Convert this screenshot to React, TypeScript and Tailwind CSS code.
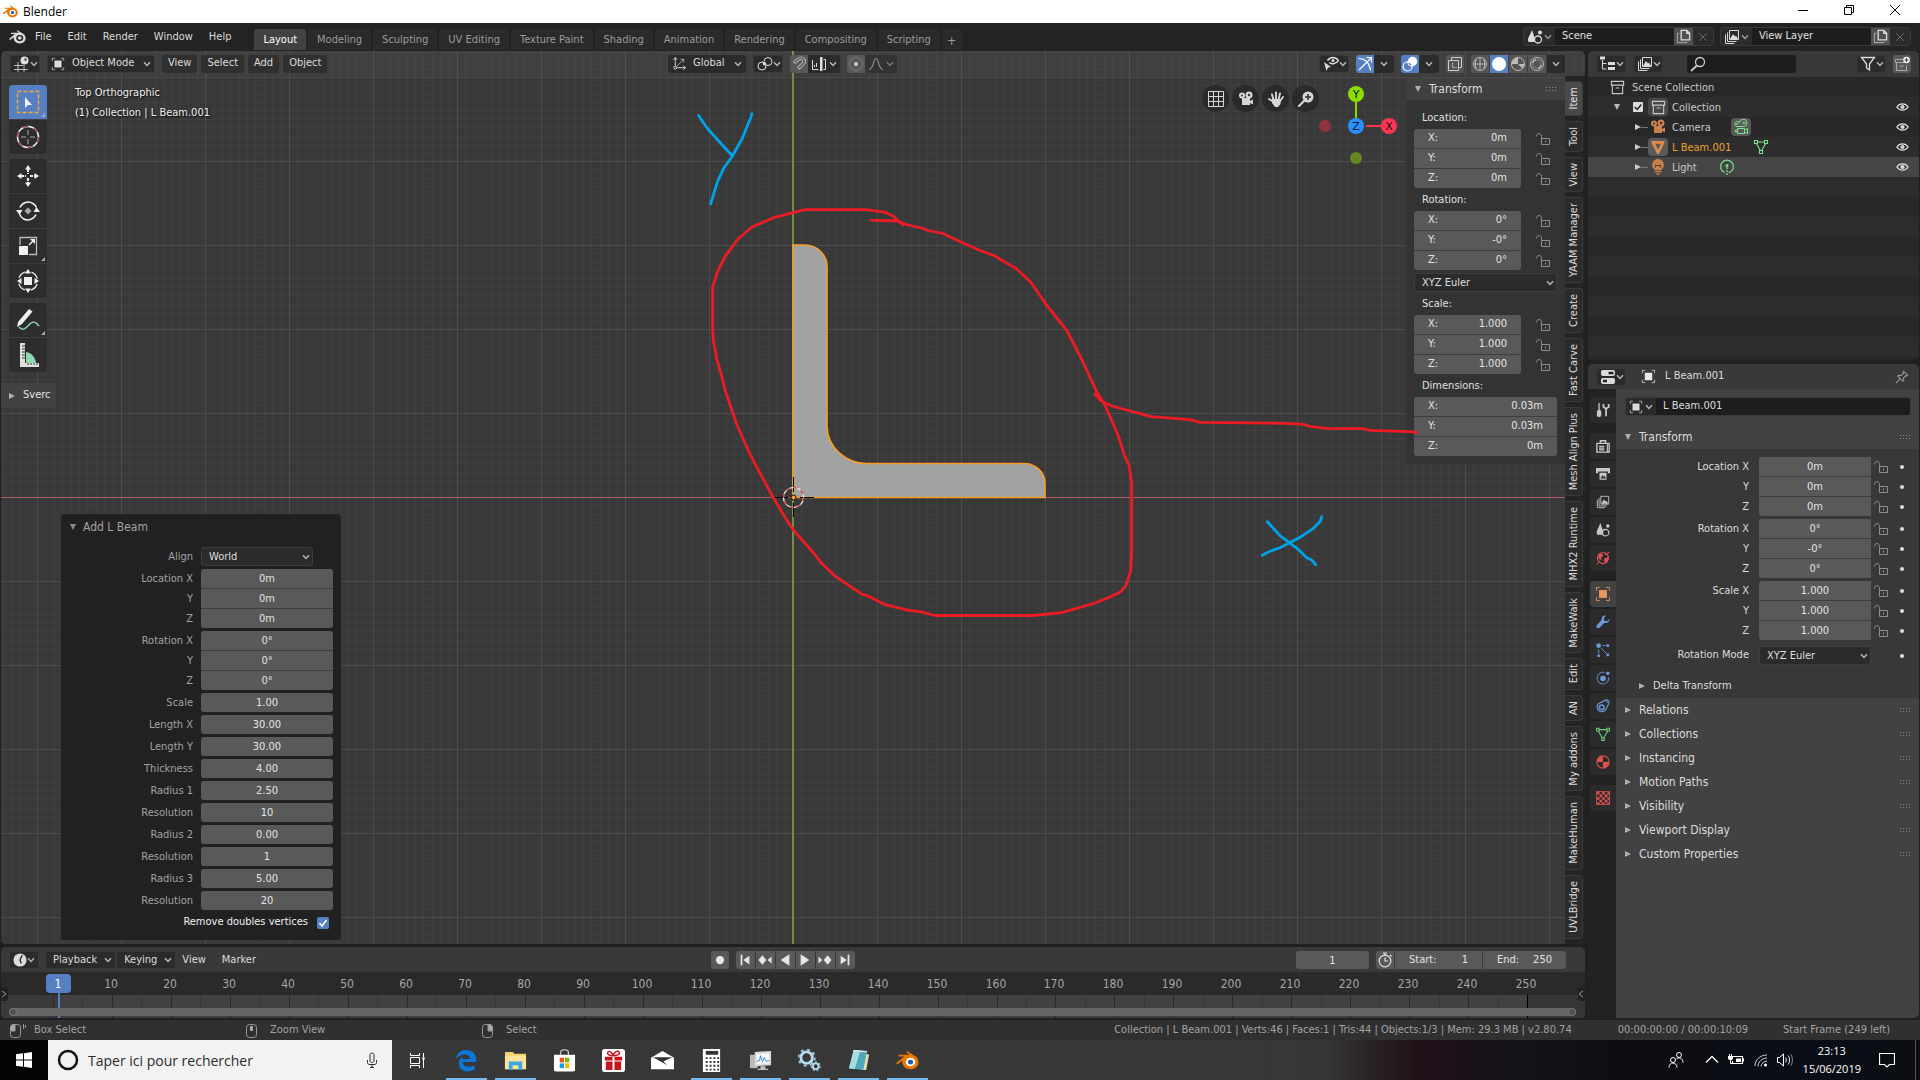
import type { ReactNode } from 'react';
import { useId } from 'react';
import clsx from 'clsx';

/* ---------- icons ---------- */

interface IconProps {
  children: ReactNode;
  className?: string;
}

function Icon({ children, className = 'h-4 w-4' }: IconProps) {
  return (
    <svg
      viewBox="0 0 16 16"
      className={clsx('shrink-0', className)}
      fill="none"
      stroke="currentColor"
      strokeWidth="1"
      aria-hidden="true"
    >
      {children}
    </svg>
  );
}

const Chevron = ({ className = 'text-[#b5b5b5]' }: { className?: string }) => (
  <svg viewBox="0 0 8 6" className={clsx('h-[6px] w-2 shrink-0', className)} aria-hidden="true">
    <path d="M1 1.2 4 4.4 7 1.2" fill="none" stroke="currentColor" strokeWidth="1.5" />
  </svg>
);

function Triangle({ open = false, className = 'text-[#b0b0b0]' }: { open?: boolean; className?: string }) {
  return (
    <svg viewBox="0 0 6 6" className={clsx('h-[6px] w-[6px] shrink-0', className)} aria-hidden="true">
      <path d={open ? 'M0 0h6L3 6z' : 'M0 0v6l6-3z'} fill="currentColor" />
    </svg>
  );
}

function BlenderLogo({ main, iris, className }: { main: string; iris: string; className: string }) {
  return (
    <svg viewBox="0 0 24 20" className={className} aria-hidden="true">
      <path
        d="M12.4.6c-.7-.6-1.8.3-1.2 1l2.7 2.4H3.6c-1.4 0-1.6 1.6-.3 1.7h5.2L.7 12c-1.2 1-.2 2.6 1.2 1.8l4.6-3.6c-.5 4.9 3.4 9 8.6 9 4.9 0 8.5-3.3 8.5-7.4 0-2.5-1.2-4.6-3-6z"
        fill={main}
      />
      <ellipse cx="15.2" cy="11.6" rx="5" ry="4.5" fill={iris === 'none' ? '#232323' : '#fff'} />
      <ellipse cx="15.2" cy="11.6" rx="2.7" ry="2.5" fill={iris === 'none' ? main : iris} />
    </svg>
  );
}

const Grip = ({ className = 'text-[#8a8a8a]' }: { className?: string }) => (
  <svg viewBox="0 0 11 4" className={clsx('h-1 w-[11px] shrink-0', className)} aria-hidden="true">
    {[0, 3, 6, 9].map((x) => (
      <path key={x} d={`M${x} 0h1v1h-1zM${x} 3h1v1h-1z`} fill="currentColor" />
    ))}
  </svg>
);

const Lock = () => (
  <svg viewBox="0 0 16 14" className="h-[14px] w-4 text-[#8f8f8f]" fill="none" stroke="currentColor" aria-hidden="true">
    <path d="M1.5 4.5c0-4 5-4 5 0v2M6.5 6.5h8v6h-8zM10.5 8.5v2" />
  </svg>
);

const ObjectIcon = ({ className }: { className?: string }) => (
  <Icon className={className}>
    <path d="M1.5 4.5v-3h3M11.5 1.5h3v3M14.5 11.5v3h-3M4.5 14.5h-3v-3" opacity=".75" />
    <path d="M4 4h8v8H4z" fill="currentColor" stroke="none" />
  </Icon>
);

const SceneIcon = () => (
  <Icon>
    <path d="M5 1 8 9.5A3.5 3.5 0 0 1 7 13H1.5C0 10 2 8 5 1z" fill="currentColor" stroke="none" />
    <circle cx="11" cy="10.5" r="3.5" strokeWidth="1.3" />
    <circle cx="13" cy="3.5" r="2" fill="currentColor" stroke="none" />
  </Icon>
);

const LayersIcon = () => (
  <Icon>
    <path d="M5.5 1.5h9v9h-9zM3.5 3.5v9h9M1.5 5.5v9h9" />
    <path d="m6 10 3-5 2 2.5 1-1 2 3.5z" fill="currentColor" stroke="none" />
  </Icon>
);

const CopyIcon = () => (
  <Icon className="h-[15px] w-[15px]">
    <path d="M5.5 1.5h6l3 3v7h-9zM11.5 1.5v3h3" strokeWidth="1.4" />
    <path d="M3.5 4.5h-2v10h10v-1" opacity=".7" />
  </Icon>
);

const CollectionIcon = () => (
  <Icon className="h-[15px] w-[15px]">
    <path d="M1.5 1.5h13v4h-13zM2.5 5.5v9h11v-9M6 8.5h4" strokeWidth="1.2" />
  </Icon>
);

const CameraIcon = () => (
  <Icon>
    <circle cx="4" cy="4.5" r="3" fill="currentColor" stroke="none" />
    <circle cx="11" cy="4" r="3.5" fill="currentColor" stroke="none" />
    <path d="M4 7h8v7H4zM12 10l3-1.5v5L12 12" fill="currentColor" stroke="none" />
    <circle cx="4" cy="4.5" r="1" fill="#333" stroke="none" />
    <circle cx="11" cy="4" r="1.2" fill="#333" stroke="none" />
  </Icon>
);

const CameraOutline = () => (
  <Icon>
    <path d="M4 7.5a2.5 2.5 0 1 1 2.5-3.5 3.7 3.7 0 1 1 4.5 3.5zM4.5 9.5h7v5h-7zM11.5 11l3-1.5v5L11.5 13M4.5 11h-2v2h2" />
    <circle cx="11" cy="4" r="1" />
    <circle cx="4" cy="5" r=".6" />
  </Icon>
);

const MeshIcon = () => (
  <Icon>
    <path d="M1.5 1.5h3v3h-3zM11.5 1.5h3v3h-3zM6.5 11.5h3v3h-3zM4.5 3h7M3.5 4.5l3.8 7M12.5 4.5l-3.8 7" strokeWidth="1.1" />
  </Icon>
);

const EyeIcon = () => (
  <Icon className="h-3 w-[13px] text-[#d8d8d8]">
    <path d="M.5 8C4 2.5 12 2.5 15.5 8 12 13.5 4 13.5.5 8z" strokeWidth="1.8" />
    <circle cx="8" cy="8" r="2.8" fill="currentColor" stroke="none" />
  </Icon>
);

/* ---------- shared controls ---------- */

const btn = 'flex h-[18px] items-center rounded-[3px] bg-[#2b2b2b] text-[#dcdcdc]';

function IconMenu({ label, children, className }: { label: string; children: ReactNode; className?: string }) {
  return (
    <button type="button" aria-label={label} className={clsx(btn, 'w-[30px] justify-between border border-[#383838] px-[3px]', className)}>
      {children}
      <Chevron />
    </button>
  );
}

function NumberField({ label, value, className }: { label: string; value: string; className?: string }) {
  return (
    <input
      aria-label={label}
      defaultValue={value}
      className={clsx('min-w-0 w-full bg-[#595959] text-center text-[11px] text-[#e4e4e4] outline-none', className)}
    />
  );
}

function Dropdown({ id, label, value, className }: { id?: string; label: string; value: string; className?: string }) {
  return (
    <div className={clsx('relative h-[19px]', className)}>
      <select
        id={id}
        aria-label={label}
        className="h-full w-full appearance-none rounded-[3px] border border-[#3e3e3e] bg-[#2b2b2b] px-[7px] text-[11px] leading-[17px] text-[#dedede] outline-none"
      >
        <option>{value}</option>
      </select>
      <span className="pointer-events-none absolute inset-y-0 right-[3px] flex items-center">
        <Chevron />
      </span>
    </div>
  );
}

/* ---------- window chrome ---------- */

function TitleBar() {
  return (
    <header className="flex h-[23px] shrink-0 items-center bg-white pl-[3px] pr-[2px] font-['Open_Sans',sans-serif] text-xs text-black">
      <BlenderLogo main="#ea7600" iris="#1f5a9e" className="h-[13px] w-[15px]" />
      <h1 className="ml-[5px]">Blender</h1>
      <div className="ml-auto flex">
        {[
          ['Minimise', 'M3 8.5h10'],
          ['Restore', 'M3.5 5.5h7v7h-7zM5.5 5V3.5h7v7H11'],
          ['Close', 'M3 3l10 10M13 3 3 13'],
        ].map(([label, d]) => (
          <button key={label} type="button" aria-label={label} className="flex w-[46px] justify-center pb-[3px]">
            <Icon className="h-4 w-4">
              <path d={d} />
            </Icon>
          </button>
        ))}
      </div>
    </header>
  );
}

const workspaces = [
  'Layout', 'Modeling', 'Sculpting', 'UV Editing', 'Texture Paint', 'Shading',
  'Animation', 'Rendering', 'Compositing', 'Scripting', '+',
];

function IdBlock({ label, value, icon }: { label: string; value: string; icon: ReactNode }) {
  return (
    <div className="flex h-[19px] w-[191px] overflow-hidden rounded-[3px] border border-[#3a3a3a]">
      <button type="button" aria-label={`Browse ${label}`} className="flex w-[31px] items-center justify-between bg-[#2b2b2b] px-[3px] text-[#dcdcdc]">
        {icon}
        <Chevron className="text-[#999]" />
      </button>
      <input aria-label={label} defaultValue={value} className="min-w-0 flex-1 bg-[#1d1d1d] px-[7px] text-[11px] text-[#e0e0e0] outline-none" />
      <button type="button" aria-label={`New ${label}`} className="flex w-[19px] items-center justify-center bg-[#505050] text-[#dcdcdc]">
        <CopyIcon />
      </button>
      <button type="button" aria-label={`Remove ${label}`} className="flex w-5 items-center justify-center bg-[#2b2b2b] text-[#6a6a6a]">
        <Icon className="h-3 w-3">
          <path d="m3 3 10 10M13 3 3 13" strokeWidth="1.3" />
        </Icon>
      </button>
    </div>
  );
}

function TopBar() {
  return (
    <div className="flex h-7 shrink-0 bg-[#232323]">
      <div className="flex items-center pl-[9px] text-[#dcdcdc]">
        <BlenderLogo main="#dcdcdc" iris="none" className="h-[14px] w-[17px]" />
        <nav className="ml-[1px] flex">
          {['File', 'Edit', 'Render', 'Window', 'Help'].map((m) => (
            <button key={m} type="button" className="px-2">{m}</button>
          ))}
        </nav>
      </div>
      <div className="ml-[15px] mt-[6px] flex h-[21px] gap-[2px]">
        {workspaces.map((w, i) => (
          <button
            key={w}
            type="button"
            className={clsx(
              'rounded-t-[3px] pt-[2px]',
              w === '+' ? 'px-[5px] text-[13px]' : 'px-[9px]',
              i === 0 ? 'bg-[#424242] text-white' : 'bg-[#2a2a2a] text-[#9b9b9b]',
            )}
          >
            {w}
          </button>
        ))}
      </div>
      <div className="ml-auto mr-[9px] mt-[4px] flex gap-[6px]">
        <IdBlock label="Scene" value="Scene" icon={<SceneIcon />} />
        <IdBlock label="View Layer" value="View Layer" icon={<LayersIcon />} />
      </div>
    </div>
  );
}

/* ---------- 3D viewport ---------- */

const range = (from: number, to: number) => Array.from({ length: to - from + 1 }, (_, i) => from + i);

function Grid() {
  return (
    <svg className="absolute inset-0 h-full w-full" aria-hidden="true">
      <g transform="translate(792 446)" shapeRendering="crispEdges">
        {range(-95, 95).map((k) => {
          const p = Math.round(k * 8.4);
          return (
            <g key={k} fill="#3f3f3f">
              <rect x={p} y="-450" width="1" height="950" />
              {k > -54 && k < 60 && <rect x="-800" y={p} width="1600" height="1" />}
            </g>
          );
        })}
        {range(-9, 9).map((k) => (
          <g key={k} fill="#4c4c4c">
            <rect x={k * 84} y="-450" width="1" height="950" />
            {k > -6 && k < 6 && <rect x="-800" y={k * 84} width="1600" height="1" />}
          </g>
        ))}
        <rect x="-800" y="0" width="1600" height="1" fill="#b05a66" />
        <rect x="-1" y="-450" width="2" height="950" fill="#6f8f3f" />
      </g>
      <g transform="translate(792 446)">
        <path
          d="M0 0V-252H11.5A22 22 0 0 1 34 -230V-72A40 38 0 0 0 76 -33.5H231A21 20 0 0 1 252 -14V.5H0z"
          fill="#a1a3a2"
          stroke="#f79c28"
          strokeWidth="1.7"
        />
        <path d="M-19 .5h14M7 .5h14M.5-20v15M.5 6v14" stroke="#000" />
        <circle cx=".5" cy=".5" r="10" fill="none" stroke="#f4f4f4" strokeWidth="1.2" />
        <circle cx=".5" cy=".5" r="10" fill="none" stroke="#e0272d" strokeWidth="1.2" strokeDasharray="3.9 3.9" />
        <circle cx=".5" cy=".5" r="2.5" fill="#f79c28" stroke="#111" strokeWidth="1" />
      </g>
    </svg>
  );
}

// freehand markup on top of the scene
function Annotations() {
  return (
    <svg className="pointer-events-none absolute inset-0 h-full w-full" aria-hidden="true">
      <g transform="translate(-1 -51)" fill="none" strokeWidth="2.8" strokeLinecap="round" strokeLinejoin="round">
        <g stroke="#ed1c24">
          <path d="M871.4 220.3 882 220.5 897 221 908 225 921.6 228 928 230.5 943 233.5 961 242 979 250 995 256 1003 261 1015.5 268 1030.6 282 1048 307 1066.5 330 1082 360 1096.7 391.7 1105 405 1118 435 1125 456.7 1129 465 1131.7 483V553L1130.7 570.7 1125.7 586 1120.7 591.7 1107.7 598 1095 603 1061.7 612.7 1033 615.5H935L920 611.7 906.7 610 884.3 604.3 868.3 596 862.3 594.3 835.7 576.7 821.7 563.3 811.7 550.7 793.3 530 785 517.3 770 491.7 750.7 455.7 736.7 424.3 725 390 722.3 378.3 716.7 358.3 713.3 340 712.7 330V286.7L717.5 271.7 725 256.7 738 239 752 227 774.7 217.3 805 209.7H866.5L885 212.3 893 216 903 225" />
          <path d="M1095 394 1101 401 1112 406 1151 416.7 1190 419.7 1200 422.3 1286.7 423.3 1305 424.7 1309 426.3 1326.7 428.3 1363 428.7 1370 430.3 1410 431.7 1417 432.3" />
        </g>
        <g stroke="#00a2e8">
          <path d="M698.4 115.3 707.3 128.3 721.6 144.3 732.2 155.7M751.8 113.7 751 117 742 139 732 156.7 723.7 168.3 717.5 181.7 710.6 204" />
          <path d="M1267.3 521.7 1280 535.7 1298.3 549.3 1306.7 557.7 1311.7 560 1315.7 564.7M1321.7 516.7 1320 521.7 1313.3 528.3 1300 537.3 1280 547.7 1270 551.3 1262.3 555.3" />
        </g>
      </g>
    </svg>
  );
}

function ViewportHeader() {
  return (
    <div className="relative flex h-[25px] items-center bg-white/[0.03] pb-[1px] pl-[9px] pr-5 pt-[1px]">
      <div className="flex flex-1 gap-[7px]">
        <IconMenu label="Editor type">
          <Icon>
            <path d="M4 6v10M10 9v7M0 9.5h9M0 13.5h14" opacity=".8" />
            <circle cx="10.5" cy="4.5" r="4" fill="currentColor" stroke="none" />
            <circle cx="11.5" cy="3.5" r="1.3" fill="#555" stroke="none" />
          </Icon>
        </IconMenu>
        <button type="button" className={clsx(btn, 'w-[108px] border border-[#383838] px-[3px]')}>
          <ObjectIcon className="h-[14px] w-[14px]" />
          <span className="ml-[7px] mr-auto">Object Mode</span>
          <Chevron />
        </button>
        <div className="flex gap-1">
          {['View', 'Select', 'Add', 'Object'].map((m) => (
            <button key={m} type="button" className={clsx(btn, 'bg-[#303030] px-[6px]')}>{m}</button>
          ))}
        </div>
      </div>
      <div className="flex gap-[7px]">
        <button type="button" className={clsx(btn, 'w-[78px] px-[4px]')}>
          <Icon className="h-[15px] w-[15px]">
            <path d="M3.5 14V2M1.5 4l2-2.5 2 2.5M2 12.5h12M12 10.5l2.5 2-2.5 2" />
            <path d="M5 11 12 4M9 3.5h3.5V7" opacity=".7" />
            <circle cx="3.5" cy="12.5" r="1.5" fill="#2b2b2b" />
          </Icon>
          <span className="ml-[6px] mr-auto">Global</span>
          <Chevron />
        </button>
        <IconMenu label="Pivot point">
          <Icon>
            <circle cx="5" cy="10" r="4" />
            <circle cx="11" cy="5.5" r="4" />
            <circle cx="7.5" cy="7.8" r="1.7" fill="currentColor" stroke="none" />
          </Icon>
        </IconMenu>
        <div className="flex">
          <button type="button" aria-label="Snap" className="flex h-[18px] w-[18px] items-center justify-center rounded-l-[3px] bg-[#595959] text-[#aaa]">
            <Icon className="h-[15px] w-[15px]">
              <path d="M1.5 6 6 2.5C12-1.5 17.5 5 12.5 9.5L8 14l-2-2 4.5-4.5c2.5-3-.5-5-3-3L3.5 8z" strokeWidth="1.2" />
            </Icon>
          </button>
          <button type="button" aria-label="Snap to" className="flex h-[18px] w-8 items-center justify-between rounded-r-[3px] bg-[#2b2b2b] px-[3px] text-[#ddd]">
            <Icon>
              <path d="M1.5 4v9.5h6M3.5 9v2M5.5 7v4M14.5 3.5h-2M14.5 3.5v10h-2" />
              <path d="M9 1h2.5v14H9z" fill="currentColor" stroke="none" />
            </Icon>
            <Chevron />
          </button>
        </div>
        <div className="flex">
          <button type="button" aria-label="Proportional editing" className="flex h-[18px] w-[18px] items-center justify-center rounded-l-[3px] bg-[#595959] text-[#ccc]">
            <Icon>
              <circle cx="8" cy="8" r="6.5" opacity=".3" />
              <circle cx="8" cy="8" r="2" fill="currentColor" stroke="none" />
            </Icon>
          </button>
          <button type="button" aria-label="Falloff" className="flex h-[18px] w-8 items-center justify-between rounded-r-[3px] bg-[#333] px-[3px] text-[#8b8b8b]">
            <Icon>
              <path d="M1 13.5c5 0 4-11 7-11s2 11 7 11" strokeWidth="1.2" />
            </Icon>
            <Chevron className="text-[#777]" />
          </button>
        </div>
      </div>
      <div className="flex flex-1 justify-end gap-[7px] pl-[10px]">
        <IconMenu label="Object visibility">
          <Icon>
            <path d="m1 6 7 5-3 .5L3.5 15z" fill="currentColor" stroke="none" />
            <path d="M4.5 4.5c3-4 8-4 11 0-3 4-7 4-9 2" strokeWidth="1.4" />
            <circle cx="10" cy="4.5" r="1.5" fill="currentColor" stroke="none" />
          </Icon>
        </IconMenu>
        <div className="flex">
          <button type="button" aria-label="Gizmos" className="flex h-[18px] w-[18px] items-center justify-center rounded-l-[3px] bg-[#5680c2] text-white">
            <Icon>
              <path d="M1.5 2.5c7 0 11 5 12 12M2 14 14 2M9.5 1.5h5v5" strokeWidth="1.2" />
            </Icon>
          </button>
          <button type="button" aria-label="Gizmo options" className="flex h-[18px] w-5 items-center justify-center rounded-r-[3px] bg-[#2b2b2b]">
            <Chevron />
          </button>
        </div>
        <div className="flex">
          <button type="button" aria-label="Overlays" className="flex h-[18px] w-[18px] items-center justify-center rounded-l-[3px] bg-[#5680c2] text-white">
            <Icon>
              <circle cx="10.5" cy="5.5" r="4.7" fill="currentColor" stroke="none" />
              <circle cx="5.5" cy="10.5" r="4.5" strokeWidth="1.2" />
              <path d="M5.5 6a4.5 4.5 0 0 1 4.5 4.5 5 5 0 0 1-4.5-4.5z" fill="#5680c2" />
            </Icon>
          </button>
          <button type="button" aria-label="Overlay options" className="flex h-[18px] w-5 items-center justify-center rounded-r-[3px] bg-[#2b2b2b]">
            <Chevron />
          </button>
        </div>
        <button type="button" aria-label="Toggle X-ray" className="flex h-[18px] w-[18px] items-center justify-center rounded-[3px] bg-[#555] text-[#ccc]">
          <Icon>
            <path d="M1.5 4.5h10v10h-10zM4.5 4V1.5h10v10H12" />
            <path d="M5.5 7v4.5h4" strokeDasharray="1.5 1" />
          </Icon>
        </button>
        <div className="flex gap-px overflow-hidden rounded-[3px] text-[#bbb]">
          <button type="button" aria-label="Wireframe" className="flex h-[18px] w-[18px] items-center justify-center bg-[#555]">
            <Icon>
              <circle cx="8" cy="8" r="6.5" />
              <path d="M8 1.5v13M1.5 8h13M4.5 2.5c-1.5 3-1.5 8 0 11M11.5 2.5c1.5 3 1.5 8 0 11" />
            </Icon>
          </button>
          <button type="button" aria-label="Solid" className="flex h-[18px] w-[18px] items-center justify-center bg-[#5680c2] text-white">
            <Icon><circle cx="8" cy="8" r="7" fill="currentColor" stroke="none" /></Icon>
          </button>
          <button type="button" aria-label="Material preview" className="flex h-[18px] w-[18px] items-center justify-center bg-[#555]">
            <Icon>
              <circle cx="8" cy="8" r="6.5" />
              <path d="M8 1.5A6.5 6.5 0 0 0 1.5 8H8zM8 8l4.5 4.5A6.5 6.5 0 0 0 14.5 8z" fill="currentColor" stroke="none" />
            </Icon>
          </button>
          <button type="button" aria-label="Rendered" className="flex h-[18px] w-[18px] items-center justify-center bg-[#555]">
            <Icon>
              <circle cx="8" cy="8" r="6.5" />
              <circle cx="8" cy="8" r="4.3" opacity=".4" />
              <path d="M3.5 7A5 5 0 0 1 7 3.5M12.5 9A5 5 0 0 1 9 12.5" strokeWidth="1.4" />
            </Icon>
          </button>
          <button type="button" aria-label="Shading options" className="flex h-[18px] w-[18px] items-center justify-center bg-[#2b2b2b]">
            <Chevron />
          </button>
        </div>
      </div>
    </div>
  );
}

const toolGroups: { label: string; more?: boolean; art: ReactNode }[][] = [
  [
    {
      label: 'Select Box',
      more: true,
      art: (
        <>
          <path d="M1.5 1.5h21v21h-21z" stroke="#f2a93b" strokeWidth="1.5" strokeDasharray="4 2" />
          <path d="M9 7v11l3-3h4z" fill="#f0f0f0" stroke="none" />
        </>
      ),
    },
    {
      label: 'Cursor',
      art: (
        <>
          <circle cx="12" cy="12" r="10.5" stroke="#eee" strokeWidth="1.5" />
          <circle cx="12" cy="12" r="10.5" stroke="#a14449" strokeWidth="1.5" strokeDasharray="5.5 5.5" />
          <path d="M12 5v5M12 14v5M5 12h5M14 12h5" stroke="#aaa" />
        </>
      ),
    },
  ],
  [
    {
      label: 'Move',
      art: (
        <>
          <path d="M12 5v5M12 14v5M5 12h5M14 12h5" strokeWidth="2" strokeDasharray="3 1" />
          <path d="m12 1 3 4.5H9zM12 23l3-4.5H9zM1 12l4.5-3v6zM23 12l-4.5-3v6z" fill="#eee" stroke="none" />
        </>
      ),
    },
    {
      label: 'Rotate',
      art: (
        <>
          <path d="M4 8.5a9 9 0 0 1 13-4M20 15.5a9 9 0 0 1-13 4M17 4.5a9 9 0 0 1 3.5 4M7 19.5A9 9 0 0 1 3.5 15" strokeWidth="1.5" />
          <path d="M0 11h6.5l-3 5zM24 13h-6.5l3-5z" fill="#eee" stroke="none" />
          <path d="m12 8.5 3.5 3.5-3.5 3.5L8.5 12z" fill="#aaa" stroke="none" />
        </>
      ),
    },
    {
      label: 'Scale',
      more: true,
      art: (
        <>
          <path d="M4 11V3.5h16.5v17H13" stroke="#bbb" strokeWidth="1.3" />
          <path d="M3 12h9v9H3zM14 5h5v5z" fill="#f0f0f0" stroke="none" />
          <path d="m13 11 4-4" strokeWidth="1.5" />
        </>
      ),
    },
    {
      label: 'Transform',
      art: (
        <>
          <circle cx="12" cy="12" r="9.5" strokeWidth="1.3" strokeDasharray="9 6" strokeDashoffset="-3" />
          <path d="M8 8h8v8H8zM12 0l3 4.5H9zM12 24l3-4.5H9zM1 12l4.5-3v6zM23 12l-4.5-3v6z" fill="#f0f0f0" stroke="none" />
        </>
      ),
    },
  ],
  [
    {
      label: 'Annotate',
      more: true,
      art: (
        <>
          <path d="m1 19 1-5L13 1l3.5 2.5L6 16z" fill="#eee" stroke="none" />
          <path d="M3 19c5 6 9-2 12-4s5-1 8 3" stroke="#8dd9ab" strokeWidth="1.5" />
        </>
      ),
    },
    {
      label: 'Measure',
      art: (
        <>
          <path d="M10 9c6 1 9 5 10 11H10z" fill="#8dd9ab" stroke="none" />
          <path d="M4 0h5v20h14v4H4z" fill="#e0e0e0" stroke="none" />
          <path d="M6 3h3M6 6h3M6 9h3M6 12h3M6 15h3M12 20v2M15 20v2M18 20v2M21 20v2" stroke="#333" />
        </>
      ),
    },
  ],
];

function Toolbar() {
  return (
    <div className="ml-2 mt-[9px] flex w-[38px] flex-col gap-[5px]">
      {toolGroups.map((group, g) => (
        <div key={g} className="flex flex-col gap-px overflow-hidden rounded-[4px]">
          {group.map((tool) => (
            <button
              key={tool.label}
              type="button"
              aria-label={tool.label}
              className={clsx(
                'relative flex h-[34px] items-center justify-center text-[#eee]',
                tool.label === 'Select Box' ? 'bg-[#5680c2]' : 'bg-[#2d2d2d]',
              )}
            >
              <svg viewBox="0 0 24 24" className="h-6 w-6" fill="none" stroke="currentColor" aria-hidden="true">
                {tool.art}
              </svg>
              {tool.more && (
                <svg viewBox="0 0 4 4" className="absolute bottom-[2px] right-[2px] h-1 w-1" aria-hidden="true">
                  <path d="M4 0v4H0z" fill="#aaa" />
                </svg>
              )}
            </button>
          ))}
        </div>
      ))}
    </div>
  );
}

const navBtn = 'flex h-[27px] w-[27px] items-center justify-center rounded-full bg-[#2a2a2a]';

function NavGizmo() {
  return (
    <div className="mr-[3px] flex items-start">
      <div className="mt-[9px] flex gap-[3px] text-[#d6d6d6]">
        <button type="button" aria-label="Toggle projection" className={navBtn}>
          <Icon><path d="M.5.5h15v15H.5zM5.5.5v15M10.5.5v15M.5 5.5h15M.5 10.5h15" /></Icon>
        </button>
        <button type="button" aria-label="Camera view" className={navBtn}>
          <CameraIcon />
        </button>
        <button type="button" aria-label="Pan" className={navBtn}>
          <Icon>
            <path d="M5.5 9 4 3.5M8 8V1.5M10.5 8.5 12 2.5M12 10l3-4M5 10.5 1 8" strokeWidth="1.9" strokeLinecap="round" />
            <path d="M4 8h9l-.5 5-2.5 3H7l-3-4z" fill="currentColor" stroke="none" />
          </Icon>
        </button>
        <button type="button" aria-label="Zoom" className={navBtn}>
          <Icon>
            <circle cx="10" cy="6" r="5.5" fill="currentColor" stroke="none" />
            <path d="M6 10 1 15" strokeWidth="2.2" strokeLinecap="round" />
            <path d="M10 3v6M7 6h6" stroke="#2a2a2a" strokeWidth="1.5" />
          </Icon>
        </button>
      </div>
      <svg viewBox="0 0 84 84" className="mt-2 h-[84px] w-[84px]" aria-hidden="true">
        <path d="M37 10v32" stroke="#8bd800" strokeWidth="2" />
        <path d="M47 42h24" stroke="#ff3352" strokeWidth="2" />
        <circle cx="6" cy="42" r="6" fill="#8f3340" />
        <circle cx="37" cy="74" r="6" fill="#64881f" />
        <circle cx="37" cy="10" r="8" fill="#8bdc00" />
        <circle cx="70" cy="42" r="8" fill="#ff3352" />
        <circle cx="37" cy="42" r="8" fill="#2890ff" />
        <g fill="#111" textAnchor="middle" className="font-['DejaVu_Sans',sans-serif] text-[11px]">
          <text x="37" y="14">Y</text>
          <text x="37" y="46">Z</text>
          <text x="70" y="46">X</text>
        </g>
      </svg>
    </div>
  );
}

interface AxisGroupProps {
  name: string;
  values: string[];
  lockable?: boolean;
}

function SideAxisGroup({ name, values, lockable = true }: AxisGroupProps) {
  return (
    <fieldset className="min-w-0">
      <legend className="flex h-[23px] w-full items-center pl-2 pt-[2px] text-[#e0e0e0]">{name}:</legend>
      <div className="flex">
        <div className="flex min-w-0 flex-1 flex-col gap-px overflow-hidden rounded-[3px] bg-[#3d3d3d]">
          {['X', 'Y', 'Z'].map((axis, i) => (
            <label key={axis} className="flex h-[19px] items-center bg-[#595959] px-[14px] text-[#e4e4e4]">
              {axis}:
              <input
                defaultValue={values[i]}
                className="w-0 min-w-0 flex-1 bg-transparent text-right text-[11px] outline-none"
              />
            </label>
          ))}
        </div>
        {lockable && (
          <div className="flex w-9 shrink-0 flex-col gap-px pl-[14px]">
            {['X', 'Y', 'Z'].map((axis) => (
              <button key={axis} type="button" aria-label={`Lock ${name} ${axis}`} className="flex h-[19px] items-center">
                <Lock />
              </button>
            ))}
          </div>
        )}
      </div>
    </fieldset>
  );
}

function SidePanel() {
  return (
    <section className="mt-[2px] w-[159px] shrink-0 self-start bg-[#333]">
      <button type="button" className="flex h-[22px] w-full items-center bg-[#404040] pl-[9px] pr-2 text-xs text-[#dedede]">
        <Triangle open />
        <span className="ml-[8px] mr-auto">Transform</span>
        <Grip />
      </button>
      <div className="px-2 pb-2 pt-[6px]">
        <SideAxisGroup name="Location" values={['0m', '0m', '0m']} />
        <SideAxisGroup name="Rotation" values={['0°', '-0°', '0°']} />
        <Dropdown label="Rotation mode" value="XYZ Euler" className="mt-[3px]" />
        <SideAxisGroup name="Scale" values={['1.000', '1.000', '1.000']} />
        <SideAxisGroup name="Dimensions" values={['0.03m', '0.03m', '0m']} lockable={false} />
      </div>
    </section>
  );
}

const sideTabs = [
  'Item', 'Tool', 'View', 'YAAM Manager', 'Create', 'Fast Carve', 'Mesh Align Plus',
  'MHX2 Runtime', 'MakeWalk', 'Edit', 'AN', 'My addons', 'MakeHuman', 'UVLBridge',
];

function SideTabs() {
  return (
    <div className="flex w-5 shrink-0 flex-col items-start gap-[5px] bg-[#242424] pt-[5px]">
      {sideTabs.map((t, i) => (
        <button
          key={t}
          type="button"
          className={clsx(
            'flex w-[18px] shrink-0 items-center justify-center rounded-r-[4px] border border-l-0 border-[#3a3a3a] py-[5px]',
            i === 0 ? 'bg-[#494949] text-[#e8e8e8]' : 'bg-[#2b2b2b] text-[#dcdcdc]',
          )}
        >
          <span className="rotate-180 leading-4 [writing-mode:vertical-rl]">{t}</span>
        </button>
      ))}
    </div>
  );
}

function AxisRows({ name, values, labelClass, fieldClass }: {
  name: string;
  values: string[];
  labelClass: string;
  fieldClass: string;
}) {
  const id = useId();
  return (
    <div className="flex">
      <div className={clsx('flex flex-col gap-px text-right', labelClass)}>
        {['X', 'Y', 'Z'].map((axis, i) => (
          <label key={axis} htmlFor={`${id}${axis}`} className="h-[19px] leading-[19px]">
            {i === 0 ? `${name} X` : axis}
          </label>
        ))}
      </div>
      <div className={clsx('flex flex-col gap-px overflow-hidden bg-[#3d3d3d]', fieldClass)}>
        {['X', 'Y', 'Z'].map((axis, i) => (
          <input
            key={axis}
            id={`${id}${axis}`}
            defaultValue={values[i]}
            className="h-[19px] w-full bg-[#595959] text-center text-[11px] text-[#e4e4e4] outline-none"
          />
        ))}
      </div>
    </div>
  );
}

const beamFields = [
  ['Scale', '1.00'],
  ['Length X', '30.00'],
  ['Length Y', '30.00'],
  ['Thickness', '4.00'],
  ['Radius 1', '2.50'],
  ['Resolution', '10'],
  ['Radius 2', '0.00'],
  ['Resolution', '1'],
  ['Radius 3', '5.00'],
  ['Resolution', '20'],
];

function OperatorPanel() {
  return (
    <section className="absolute bottom-1 left-[60px] w-[280px] rounded-[3px] bg-[#212121] text-[#a3a3a3]">
      <button type="button" className="flex h-[26px] w-full items-center pl-[9px] text-xs">
        <Triangle open className="text-[#8a8a8a]" />
        <span className="ml-[7px]">Add L Beam</span>
      </button>
      <div className="flex flex-col gap-[3px] pb-2 pr-2 pt-[7px]">
        <div className="flex">
          <label htmlFor="align" className="mr-2 w-[132px] text-right leading-[19px]">Align</label>
          <Dropdown id="align" label="Align" value="World" className="w-[112px]" />
        </div>
        <AxisRows name="Location" values={['0m', '0m', '0m']} labelClass="mr-2 w-[132px]" fieldClass="flex-1 rounded-[3px]" />
        <AxisRows name="Rotation" values={['0°', '0°', '0°']} labelClass="mr-2 w-[132px]" fieldClass="flex-1 rounded-[3px]" />
        {beamFields.map(([label, value], i) => (
          <label key={i} className="flex">
            <span className="mr-2 w-[132px] shrink-0 text-right leading-[19px]">{label}</span>
            <NumberField label={label} value={value} className="h-[19px] rounded-[3px]" />
          </label>
        ))}
        <label className="flex h-[19px] items-center justify-end gap-[9px] pr-[4px] text-[#efefef]">
          Remove doubles vertices
          <span className="relative flex h-3 w-3">
            <input type="checkbox" defaultChecked className="h-3 w-3 appearance-none rounded-[2px] bg-[#5680c2]" />
            <svg viewBox="0 0 12 12" className="pointer-events-none absolute inset-0" aria-hidden="true">
              <path d="m2.5 6 2.5 3 4.5-6" fill="none" stroke="#fff" strokeWidth="1.6" />
            </svg>
          </span>
        </label>
      </div>
    </section>
  );
}

function Viewport() {
  return (
    <main className="relative flex min-h-0 flex-1 flex-col overflow-hidden rounded-[5px] bg-[#393939]">
      <Grid />
      <ViewportHeader />
      <div className="relative flex min-h-0 flex-1">
        <div className="w-[55px]">
          <Toolbar />
          <button type="button" className="mt-[11px] flex h-[25px] w-[55px] items-center bg-[#424242] pl-2 text-[#e4e4e4]">
            <Triangle />
            <span className="ml-2">Sverc</span>
          </button>
        </div>
        <div className="ml-[19px] mt-[7px] leading-5 text-[#f0f0f0] [text-shadow:1px_1px_2px_#000]">
          <p>Top Orthographic</p>
          <p>(1) Collection | L Beam.001</p>
        </div>
        <div className="ml-auto flex">
          <NavGizmo />
          <SidePanel />
          <SideTabs />
        </div>
      </div>
      <OperatorPanel />
      <Annotations />
    </main>
  );
}

/* ---------- timeline ---------- */

const frameX = (f: number) => Math.round(52 + f * 5.897);

const transport = [
  ['Jump to start', 'M3 2v12h2V2zM13 3v10L6 8z'],
  ['Previous keyframe', 'M5 2.5 9.5 8 5 13.5.5 8zM15.5 4v8L11 8z'],
  ['Play reversed', 'M13 1.5v13L3 8z'],
  ['Play', 'M3 1.5v13L13 8z'],
  ['Next keyframe', 'M11 2.5 15.5 8 11 13.5 6.5 8zM.5 4v8L5 8z'],
  ['Jump to end', 'M11 2v12h2V2zM3 3v10l7-5z'],
];

function Timeline() {
  return (
    <section className="mt-[3px] shrink-0 overflow-hidden rounded-[5px] bg-[#393939]">
      <div className="flex h-[25px] items-center pl-2 pr-[19px] pt-px">
        <div className="flex flex-1 items-center">
          <IconMenu label="Editor type">
            <Icon className="h-[14px] w-[14px]">
              <circle cx="8" cy="8" r="7.5" fill="currentColor" stroke="none" />
              <path d="M10.5 2.5 8 8l1.5 4" stroke="#222" strokeWidth="1.5" />
            </Icon>
          </IconMenu>
          {['Playback', 'Keying'].map((m, i) => (
            <button key={m} type="button" className={clsx(btn, 'gap-[7px] rounded-none border border-[#383838] pl-[7px] pr-[3px]', i === 0 && 'ml-[6px]')}>
              {m}
              <Chevron />
            </button>
          ))}
          <button type="button" className="ml-[6px] text-[#dcdcdc]">View</button>
          <button type="button" className="ml-4 text-[#dcdcdc]">Marker</button>
        </div>
        <div className="flex gap-[7px] text-[#e6e6e6]">
          <button type="button" aria-label="Auto keying" className="flex h-[18px] w-[18px] items-center justify-center rounded-[3px] bg-[#595959]">
            <Icon className="h-3 w-3"><circle cx="8" cy="8" r="5.5" fill="currentColor" stroke="none" /></Icon>
          </button>
          <div className="flex gap-px overflow-hidden rounded-[3px]">
            {transport.map(([label, d]) => (
              <button key={label} type="button" aria-label={label} className="flex h-[18px] w-[19px] items-center justify-center bg-[#595959]">
                <Icon className="h-[14px] w-4">
                  <path d={d} fill="currentColor" stroke="none" />
                </Icon>
              </button>
            ))}
          </div>
        </div>
        <div className="flex flex-1 justify-end gap-[7px] pl-[10px]">
          <NumberField label="Current frame" value="1" className="h-[18px] max-w-[73px] rounded-[3px]" />
          <div className="flex h-[18px] gap-px overflow-hidden rounded-[3px] text-[#e4e4e4]">
            <button type="button" aria-label="Use preview range" className="flex w-[18px] items-center justify-center bg-[#595959]">
              <Icon>
                <circle cx="8" cy="9" r="5.8" strokeWidth="1.2" />
                <path d="M8 5.5V9h3M6 1h4M8 1v2M13 3l1.5 1.5" strokeWidth="1.2" />
              </Icon>
            </button>
            <label className="flex w-[87px] items-center bg-[#595959] px-[14px]">
              Start:
              <input defaultValue="1" className="min-w-0 flex-1 bg-transparent text-right text-[11px] outline-none" />
            </label>
            <label className="flex w-[83px] items-center bg-[#595959] px-[14px]">
              End:
              <input defaultValue="250" className="min-w-0 flex-1 bg-transparent text-right text-[11px] outline-none" />
            </label>
          </div>
        </div>
      </div>
      <div className="relative h-[46px] bg-[#414141]">
        <svg className="absolute inset-0 h-full w-full" shapeRendering="crispEdges" role="img" aria-label="Frame ruler">
          <rect width="100%" height="23" fill="#2a2a2a" />
          <rect y="23" width="57" height="23" fill="#3a3a3a" />
          <rect x={frameX(250)} y="23" width="100" height="23" fill="#363636" />
          {range(0, 51).map((k) => (
            <rect key={k} x={frameX(k * 5)} y="23" width="1" height="23" fill={k === 50 ? '#000' : k % 2 ? '#383838' : '#2b2b2b'} />
          ))}
          <g fill="#a6a6a6" textAnchor="middle" className="text-[12px]">
            {range(1, 25).map((k) => (
              <text key={k} x={frameX(k * 10) - 1} y="16">{k * 10}</text>
            ))}
          </g>
          <rect x="57" y="20" width="2" height="26" fill="#5680c2" />
          <rect x="45" y="2" width="25" height="19" rx="4" fill="#5680c2" shapeRendering="auto" />
          <text x="57" y="16" textAnchor="middle" fill="#fff" className="text-[12px]">1</text>
        </svg>
        <div className="absolute bottom-[2px] left-2 right-[9px] flex h-2 items-center justify-between rounded-full bg-[#666]">
          <span className="h-2 w-2 rounded-full border border-[#777] bg-[#505050]" />
          <span className="h-2 w-2 rounded-full border border-[#777] bg-[#505050]" />
        </div>
        <button type="button" aria-label="Show channels" className="absolute left-0 top-[15px] flex h-[14px] w-[7px] items-center rounded-r-[3px] bg-[#222] text-[#999]">
          <svg viewBox="0 0 6 8" className="h-2 w-[6px]" aria-hidden="true"><path d="m1 1 4 3-4 3" fill="none" stroke="currentColor" /></svg>
        </button>
        <button type="button" aria-label="Show sidebar" className="absolute right-0 top-[15px] flex h-[14px] w-[7px] items-center rounded-l-[3px] bg-[#222] text-[#999]">
          <svg viewBox="0 0 6 8" className="h-2 w-[6px]" aria-hidden="true"><path d="M5 1 1 4l4 3" fill="none" stroke="currentColor" /></svg>
        </button>
      </div>
    </section>
  );
}

/* ---------- outliner ---------- */

interface OutlinerItem {
  name: string;
  icon: ReactNode;
  data: ReactNode;
  active?: boolean;
}

const outlinerItems: OutlinerItem[] = [
  {
    name: 'Camera',
    icon: <span className="flex h-[18px] w-5 items-center justify-center text-[#c9814b]"><CameraIcon /></span>,
    data: <span className="flex h-[18px] w-5 items-center justify-center rounded-[4px] bg-[#5a5a5a] text-[#7ee084]"><CameraOutline /></span>,
  },
  {
    name: 'L Beam.001',
    icon: (
      <span className="flex h-[18px] w-5 items-center justify-center rounded-[4px] bg-[#5a5a5a] text-[#e08a4a]">
        <Icon className="h-[15px] w-4"><path d="M2.5 2.5h11L8 13.5z" strokeWidth="3" strokeLinejoin="round" /></Icon>
      </span>
    ),
    data: <span className="flex h-[18px] w-5 items-center justify-center text-[#7ee084]"><MeshIcon /></span>,
    active: true,
  },
  {
    name: 'Light',
    icon: (
      <span className="flex h-[18px] w-5 items-center justify-center text-[#c9814b]">
        <Icon>
          <path d="M8 0a5.8 5.8 0 0 1 4 10l-1 1H5l-1-1A5.8 5.8 0 0 1 8 0z" fill="currentColor" stroke="none" />
          <path d="M4.5 12.5h7M6.5 15h3" strokeWidth="1.5" />
          <path d="M5.5 5.5v3M10.5 5.5v3M5.5 6.5h5" stroke="#444" />
        </Icon>
      </span>
    ),
    data: (
      <span className="flex h-[18px] w-5 items-center justify-center text-[#7ee084]">
        <Icon>
          <circle cx="8" cy="7.5" r="6.3" strokeDasharray="36 4" strokeDashoffset="-12" strokeWidth="1.2" />
          <circle cx="8" cy="6.5" r="1.5" fill="currentColor" stroke="none" />
          <path d="M8 8v8" strokeDasharray="2 1" strokeWidth="1.3" />
        </Icon>
      </span>
    ),
  },
];

function Outliner() {
  return (
    <section className="flex h-[309px] shrink-0 flex-col overflow-hidden rounded-[5px] bg-[#282828] text-[#c8c8c8]">
      <div className="flex h-[26px] shrink-0 items-center bg-[#393939] px-[8px] pb-px">
        <IconMenu label="Editor type">
          <Icon>
            <path d="M0 2h5M8 7.5h7M8 12.5h7" strokeWidth="3" />
            <path d="M2.5 4v9h4M2.5 7.5h4" />
          </Icon>
        </IconMenu>
        <IconMenu label="Display mode" className="ml-[7px]"><LayersIcon /></IconMenu>
        <div className="relative ml-6 h-[18px] w-[109px]">
          <input aria-label="Search" className="h-full w-full rounded-[3px] bg-[#1d1d1d] pl-5 text-[11px] outline-none" />
          <Icon className="pointer-events-none absolute left-[3px] top-[1px] h-4 w-4 text-[#ccc]">
            <circle cx="10" cy="6" r="4.5" strokeWidth="1.3" />
            <path d="m7 9.5-6 5.5" strokeWidth="1.8" />
          </Icon>
        </div>
        <IconMenu label="Filter" className="ml-auto">
          <Icon><path d="M1.5 1.5h13L9.5 8v6l-3-2V8z" strokeWidth="1.3" /></Icon>
        </IconMenu>
        <button type="button" aria-label="New collection" className="ml-[7px] flex h-[18px] w-[18px] items-center justify-center rounded-[3px] bg-[#595959] text-[#aaa]">
          <Icon>
            <path d="M9 3.5H1.5v3H11M2.5 6.5v8h10v-5M5.5 10h4" />
            <circle cx="12.5" cy="4" r="3.3" fill="#eee" stroke="none" />
            <path d="M12.5 2v4M10.5 4h4" stroke="#444" />
          </Icon>
        </button>
      </div>
      <div className="flex min-h-0 flex-1 flex-col">
        <div className="flex h-5 shrink-0 items-center pl-[22px]">
          <CollectionIcon />
          <span className="ml-[7px] pt-[2px]">Scene Collection</span>
        </div>
        <div className="flex h-5 shrink-0 items-center bg-[#2d2d2d] pl-[26px] pr-[10px]">
          <Triangle open className="text-[#bbb]" />
          <span className="relative ml-[13px] flex h-[10px] w-[10px]">
            <input type="checkbox" aria-label="Enable Collection" defaultChecked className="h-[10px] w-[10px] appearance-none rounded-[1px] bg-[#dcdcdc]" />
            <svg viewBox="0 0 12 12" className="pointer-events-none absolute inset-0" aria-hidden="true">
              <path d="m2 6 3 3 5-6" fill="none" stroke="#222" strokeWidth="1.8" />
            </svg>
          </span>
          <span className="ml-[5px] flex h-[18px] w-5 items-center justify-center rounded-[4px] bg-[#484848]"><CollectionIcon /></span>
          <span className="ml-1 pt-[2px]">Collection</span>
          <button type="button" aria-label="Hide Collection" className="ml-auto"><EyeIcon /></button>
        </div>
        {outlinerItems.map((item, i) => (
          <div
            key={item.name}
            className={clsx(
              'flex h-5 shrink-0 items-center pl-[47px] pr-[10px]',
              i === 0 && 'bg-[#282828]',
              i === 1 && 'bg-[#2d2d2d]',
              i === 2 && 'bg-[#454545]',
            )}
          >
            <Triangle className="text-[#ccc]" />
            <span className="h-px w-[7px] bg-[#777]" />
            {item.icon}
            <span className={clsx('ml-1 mr-5 pt-[2px]', item.active && 'text-[#f0a030]')}>{item.name}</span>
            {item.data}
            <button type="button" aria-label={`Hide ${item.name}`} className="ml-auto"><EyeIcon /></button>
          </div>
        ))}
        <div className="flex-1 bg-[repeating-linear-gradient(#2d2d2d_0_20px,#282828_20px_40px)]" />
      </div>
    </section>
  );
}

/* ---------- properties editor ---------- */

const propertyTabs: { label: string; color: string; art: ReactNode }[][] = [
  [
    {
      label: 'Tool',
      color: 'text-[#c8c8c8]',
      art: (
        <>
          <path d="M3.5 0v8M1.5 11h4" strokeWidth="1.5" />
          <rect x="1" y="8" width="5" height="8" rx="2" fill="currentColor" stroke="none" />
          <path d="M11.5 15V6M8.5 1v3.5l3 2 3-2V1" strokeWidth="2" />
        </>
      ),
    },
  ],
  [
    {
      label: 'Render',
      color: 'text-[#c8c8c8]',
      art: (
        <>
          <path d="M1 5h14v10H1zM5 2h6v3H5z" strokeWidth="1.6" />
          <path d="M3.5 8.5h6M3.5 10.5h6M3.5 12.5h6M13 6v9" strokeWidth="1.3" />
        </>
      ),
    },
    {
      label: 'Output',
      color: 'text-[#c8c8c8]',
      art: (
        <>
          <path d="M0 1h16v6h-2.5V5h-11v2H0z" fill="currentColor" stroke="none" />
          <path d="M4 6.5h8v8H4z" fill="currentColor" stroke="none" />
          <path d="m5 13 2.5-3.5L9 11l1-1 1.5 3z" fill="#333" stroke="none" />
        </>
      ),
    },
    {
      label: 'View Layer',
      color: 'text-[#c8c8c8]',
      art: (
        <>
          <path d="M5.5 1.5h9v9h-9zM3.5 3.5v9h9M1.5 5.5v9h9" />
          <path d="m6 10 3-5 2 2.5 1-1 2 3.5z" fill="currentColor" stroke="none" />
        </>
      ),
    },
    {
      label: 'Scene',
      color: 'text-[#c8c8c8]',
      art: (
        <>
          <path d="M5 0 8 9a4 4 0 0 1-1 4.5H1.5C-.5 10 2 8 5 0z" fill="currentColor" stroke="none" />
          <circle cx="11" cy="11" r="3.7" strokeWidth="1.4" />
          <circle cx="13.5" cy="3.5" r="2" fill="currentColor" stroke="none" />
        </>
      ),
    },
    {
      label: 'World',
      color: 'text-[#d9534f]',
      art: (
        <>
          <circle cx="8" cy="8" r="6.3" strokeWidth="1.4" />
          <path d="M3 4c3-2 5-1 5 1s-3 1.5-2 4-2 1-3-1zM10 8l4-1v3l-3 4-2-3zM9 2l4 2-2 1z" fill="currentColor" stroke="none" />
          <path d="m1 15 2-2M13 3l2-2" strokeWidth="1.3" />
        </>
      ),
    },
  ],
  [
    {
      label: 'Object',
      color: 'text-[#e8965a]',
      art: (
        <>
          <path d="M.5 4.5v-4h4M11.5.5h4v4M15.5 11.5v4h-4M4.5 15.5h-4v-4" />
          <path d="M3.5 3.5h9v9h-9z" fill="currentColor" stroke="none" />
        </>
      ),
    },
    {
      label: 'Modifiers',
      color: 'text-[#6d97d8]',
      art: <path d="M15.5 4.5 12.5 7 9.5 6.5 9 3.5 11.5.7C8 0 6 2.5 6.5 5.5L.8 12c-1.3 2 1 4 2.8 2.8L9.5 9c3 1 6-1 6-4.5z" fill="currentColor" stroke="none" />,
    },
    {
      label: 'Particles',
      color: 'text-[#6d97d8]',
      art: (
        <>
          <circle cx="3" cy="3" r="2.7" fill="currentColor" stroke="none" />
          <path d="M7 3h4M3 7v5M5.5 5.5 12 12" />
          <path d="M12 1.5h3v3h-3zM1.5 13h3v3h-3zM12 12h3v3h-3z" fill="currentColor" stroke="none" />
        </>
      ),
    },
    {
      label: 'Physics',
      color: 'text-[#6d97d8]',
      art: (
        <>
          <path d="M10 1.8a6.7 6.7 0 1 0 4.5 5" strokeWidth="1.2" opacity=".8" />
          <circle cx="8" cy="8.5" r="3.2" fill="currentColor" stroke="none" />
          <circle cx="13.5" cy="2.7" r="2" fill="currentColor" stroke="none" />
        </>
      ),
    },
    {
      label: 'Constraints',
      color: 'text-[#6d97d8]',
      art: (
        <>
          <path d="M2.5 5.5 11 1.3c2.5-1 4.5 1.5 3.7 3.5L11 12.5A5.2 5.2 0 1 1 2.5 5.5z" strokeWidth="1.3" />
          <circle cx="6.5" cy="9.5" r="2.7" strokeWidth="1.8" />
          <circle cx="12.5" cy="3.5" r="1" fill="currentColor" stroke="none" />
        </>
      ),
    },
    {
      label: 'Object Data',
      color: 'text-[#6fd07a]',
      art: <path d="M.5 1.5h3v3h-3zM12.5 1.5h3v3h-3zM6.5 12.5h3v3h-3zM3.5 3h9M2.5 4.5l4.8 8M13.5 4.5l-4.8 8" strokeWidth="1.2" />,
    },
    {
      label: 'Material',
      color: 'text-[#d9534f]',
      art: (
        <>
          <circle cx="8" cy="8" r="7" strokeWidth="1.2" />
          <path d="M8 1a7 7 0 0 0-7 7h7zM8 8v7a7 7 0 0 0 7-7z" fill="currentColor" stroke="none" />
        </>
      ),
    },
  ],
  [
    {
      label: 'Texture',
      color: 'text-[#d9534f]',
      art: (
        <>
          <path d="M.5.5h15v15H.5z" />
          <path d="M1 1h3v3H1zM7 1h3v3H7zM4 4h3v3H4zM10 4h3v3h-3zM1 7h3v3H1zM7 7h3v3H7zM13 7h2v3h-2zM4 10h3v3H4zM10 10h3v3h-3zM13 1h2v3h-2zM1 13h3v2H1zM7 13h3v2H7zM13 13h2v2h-2z" fill="currentColor" stroke="none" />
        </>
      ),
    },
  ],
];

function LockColumn({ name }: { name: string }) {
  return (
    <>
      <div className="ml-[2px] flex w-5 flex-col gap-px">
        {['X', 'Y', 'Z'].map((axis) => (
          <button key={axis} type="button" aria-label={`Lock ${name} ${axis}`} className="flex h-[19px] items-center">
            <Lock />
          </button>
        ))}
      </div>
      <div className="ml-[7px] flex flex-col gap-px">
        {['X', 'Y', 'Z'].map((axis) => (
          <button key={axis} type="button" aria-label={`Animate ${name} ${axis}`} className="flex h-[19px] items-center">
            <span className="h-1 w-1 rounded-full bg-[#dcdcdc]" />
          </button>
        ))}
      </div>
    </>
  );
}

const transformGroups = [
  { name: 'Location', values: ['0m', '0m', '0m'] },
  { name: 'Rotation', values: ['0°', '-0°', '0°'] },
  { name: 'Scale', values: ['1.000', '1.000', '1.000'] },
];

function Properties() {
  return (
    <section className="mt-1 flex min-h-0 flex-1 flex-col overflow-hidden rounded-[5px] bg-[#424242] text-[#dcdcdc]">
      <div className="flex h-[25px] shrink-0 items-center bg-[#393939] pl-[8px] pr-[10px]">
        <IconMenu label="Editor type">
          <Icon>
            <rect x="1" y="1" width="14" height="6" rx="2" fill="currentColor" stroke="none" />
            <rect x="1" y="9" width="14" height="6" rx="2" fill="currentColor" stroke="none" />
            <path d="M8.5 4h5M3 12h4" stroke="#222" strokeWidth="2.5" />
          </Icon>
        </IconMenu>
        <ObjectIcon className="ml-[15px] h-[15px] w-[15px] text-[#e8e8e8]" />
        <span className="ml-[9px] mr-auto">L Beam.001</span>
        <button type="button" aria-label="Pin" className="text-[#999]">
          <Icon className="h-[14px] w-[14px]">
            <path d="M10 1.5 14.5 6 13 7l-1-.5-2.5 3 .5 2.5-1 1L3 7l1-1 2.5.5 3-2.5-.5-1zM5.5 10.5 1 15" strokeWidth="1.2" />
          </Icon>
        </button>
      </div>
      <div className="flex min-h-0 flex-1">
        <div className="flex w-7 shrink-0 flex-col gap-[10px] bg-[#222] pl-[2px] pt-[8px]">
          {propertyTabs.map((group, g) => (
            <div key={g} className="flex flex-col gap-[2px]">
              {group.map((tab) => (
                <button
                  key={tab.label}
                  type="button"
                  aria-label={tab.label}
                  className={clsx(
                    'flex h-[26px] items-center justify-center rounded-l-[4px]',
                    tab.color,
                    tab.label === 'Object' ? 'bg-[#424242]' : 'bg-[#2b2b2b]',
                  )}
                >
                  <Icon className="h-[14px] w-[14px]">{tab.art}</Icon>
                </button>
              ))}
            </div>
          ))}
        </div>
        <div className="min-w-0 flex-1">
          <div className="ml-[9px] mr-2 mt-[8px] flex h-[19px] overflow-hidden rounded-[3px] border border-[#3a3a3a]">
            <button type="button" aria-label="Browse object" className="flex w-[30px] items-center justify-between bg-[#2b2b2b] px-[3px]">
              <ObjectIcon className="h-[14px] w-[14px]" />
              <Chevron />
            </button>
            <input aria-label="Object name" defaultValue="L Beam.001" className="min-w-0 flex-1 bg-[#1d1d1d] px-[7px] text-[11px] outline-none" />
          </div>
          <button type="button" className="mt-[9px] flex h-6 w-full items-center pl-[9px] pr-2 text-xs">
            <Triangle open />
            <span className="ml-[8px] mr-auto">Transform</span>
            <Grip />
          </button>
          <div className="flex flex-col gap-[3px] bg-[#383838] pt-[8px]">
            {transformGroups.map((g) => (
              <div key={g.name} className="flex pr-[15px]">
                <div className="flex-1">
                  <AxisRows name={g.name} values={g.values} labelClass="mr-[10px] flex-1" fieldClass="w-[112px] rounded-l-[3px]" />
                </div>
                <LockColumn name={g.name} />
              </div>
            ))}
            <div className="mt-[3px] flex items-center pr-[15px]">
              <label htmlFor="rotation-mode" className="mr-[10px] flex-1 text-right">Rotation Mode</label>
              <Dropdown id="rotation-mode" label="Rotation Mode" value="XYZ Euler" className="w-[112px]" />
              <button type="button" aria-label="Animate Rotation Mode" className="ml-[29px]">
                <span className="block h-1 w-1 rounded-full bg-[#dcdcdc]" />
              </button>
            </div>
            <button type="button" className="mt-[6px] flex h-6 items-center pl-[23px]">
              <Triangle />
              <span className="ml-[8px]">Delta Transform</span>
            </button>
          </div>
          {['Relations', 'Collections', 'Instancing', 'Motion Paths', 'Visibility', 'Viewport Display', 'Custom Properties'].map((p) => (
            <button key={p} type="button" className="flex h-6 w-full items-center pl-[9px] pr-2 text-xs">
              <Triangle />
              <span className="ml-[8px] mr-auto">{p}</span>
              <Grip />
            </button>
          ))}
        </div>
      </div>
    </section>
  );
}

/* ---------- status bar and taskbar ---------- */

function MouseHint({ button, label }: { button: 'left' | 'middle' | 'right'; label: string }) {
  return (
    <div className="flex w-[236px] items-center">
      <svg viewBox="0 0 18 16" className="h-4 w-[18px]" fill="none" stroke="#999" aria-hidden="true">
        <rect x="1.5" y="1.5" width="10" height="13" rx="3" />
        {button === 'left' && <path d="M1.5 8V4l2-2.5H6V8zM14.5 1v5M16.5 2v3" fill="#aaa" />}
        {button === 'middle' && <rect x="5" y="3" width="3" height="5" rx="1" fill="#aaa" stroke="none" />}
        {button === 'right' && <path d="M11.5 8V4l-2-2.5H7V8z" fill="#aaa" />}
      </svg>
      <span className="ml-[7px]">{label}</span>
    </div>
  );
}

function StatusBar() {
  return (
    <footer className="mt-[2px] flex h-5 shrink-0 items-center bg-[#303030] pl-[9px] pr-[30px] pt-px text-[#a3a3a3]">
      <MouseHint button="left" label="Box Select" />
      <MouseHint button="middle" label="Zoom View" />
      <MouseHint button="right" label="Select" />
      <span className="ml-auto">Collection | L Beam.001 | Verts:46 | Faces:1 | Tris:44 | Objects:1/3 | Mem: 29.3 MB | v2.80.74</span>
      <span className="ml-[46px]">00:00:00:00 / 00:00:10:09</span>
      <span className="ml-[35px]">Start Frame (249 left)</span>
    </footer>
  );
}

const taskbarApps: { name: string; running: boolean; art: ReactNode }[] = [
  {
    name: 'Edge',
    running: true,
    art: <path d="M1 10.5C2 4 6 1 12 1c6.5 0 10 4.5 10 10v2.5H8c0 5 7 6.5 12.5 3.5v4.5C13 25.5 4 23 4 15c0-3.5 2-6 4.5-7.5C7.5 9 7.3 10 7.3 10.5h8.4c0-6-9-6.5-14.7 0z" fill="#0a78d6" />,
  },
  {
    name: 'File Explorer',
    running: true,
    art: (
      <>
        <path d="M1 3h8l2 2h12v16H1z" fill="#f5cf6b" />
        <path d="M1 7h22v14H1z" fill="#fde39a" />
        <path d="M5 13h14v9h-4v-5H9v5H5z" fill="#3ba7e0" />
      </>
    ),
  },
  {
    name: 'Store',
    running: false,
    art: (
      <>
        <path d="M8 6V3c0-3 8-3 8 0v3" fill="none" stroke="#ddd" strokeWidth="1.2" />
        <path d="M1 6h22v16c0 1-1 1.5-2 1.5H3c-1 0-2-.5-2-1.5z" fill="#fff" />
        <path d="M7 9h4.5v5H7z" fill="#f25022" />
        <path d="M12.5 9H17v5h-4.5z" fill="#7fba00" />
        <path d="M7 15h4.5v5H7z" fill="#00a4ef" />
        <path d="M12.5 15H17v5h-4.5z" fill="#ffb900" />
      </>
    ),
  },
  {
    name: 'Gift',
    running: false,
    art: (
      <>
        <rect x="0" y="0" width="24" height="24" rx="3" fill="#fff" />
        <path d="M3 8h8v4H3zM13 8h8v4h-8zM4 13h7v9H4zM13 13h7v9h-7z" fill="#c4161c" />
        <path d="M11.5 7C8 7 5 6 6 3.5s5 0 5.5 3.5C12.5 3 17 1 18 3.5S15 7 11.5 7z" fill="none" stroke="#c4161c" strokeWidth="1.5" />
      </>
    ),
  },
  {
    name: 'Mail',
    running: false,
    art: (
      <>
        <path d="M0 9 12 2l12 7v12H0z" fill="#fff" />
        <path d="M2 8.5h20L13 13l4 4-6-3.5z" fill="#333" />
      </>
    ),
  },
  {
    name: 'Calculator',
    running: true,
    art: (
      <>
        <path d="M3 0h18v24H3z" fill="#fff" />
        <path d="M6 2h13v4H6z" fill="#333" />
        <path d="M6 9.5h14M6 13.5h14M6 17.5h14M6 21.5h14" stroke="#333" strokeWidth="2" strokeDasharray="2 2" />
      </>
    ),
  },
  {
    name: 'Resource Monitor',
    running: true,
    art: (
      <>
        <path d="M1 6h8v14H1z" fill="#b9b9b9" />
        <path d="m6 3 17-1v15l-17 1z" fill="#d8d8d8" />
        <path d="m8 5 13-.7v11L8 16z" fill="#f2f8fd" />
        <path d="m8 13 3-1 1-5 2 6 2-4 2 4 3-1" stroke="#3b84c4" fill="none" />
        <path d="M12 18h5v2.5h3V22H9v-1.5h3z" fill="#c4c4c4" />
      </>
    ),
  },
  {
    name: 'Services',
    running: true,
    art: (
      <>
        <circle cx="9" cy="9" r="6" fill="none" stroke="#b5dcf2" strokeWidth="3" />
        <circle cx="9" cy="9" r="8.5" fill="none" stroke="#9ecbe8" strokeWidth="2" strokeDasharray="3 3.7" />
        <circle cx="18.5" cy="18" r="3" fill="none" stroke="#b5dcf2" strokeWidth="2" />
        <circle cx="18.5" cy="18" r="4.5" fill="none" stroke="#9ecbe8" strokeWidth="1.5" strokeDasharray="2 2" />
      </>
    ),
  },
  {
    name: 'Notepad',
    running: true,
    art: (
      <>
        <path d="m20 5 3 1-3 16h-5z" fill="#e8dfae" />
        <path d="m7 1 14 1-4 20-15-2z" fill="#4fa9b8" />
        <path d="m7 1 7 .5L8 21l-6-1z" fill="#a6dce2" />
        <path d="m7 1 14 1v1.5L6.5 2.5z" fill="#dfe9ea" />
      </>
    ),
  },
];

function Taskbar() {
  return (
    <footer className="flex h-10 shrink-0 bg-[linear-gradient(90deg,#383838_0,#373737_69%,#2b2628_71%,#211119_74%,#131319_79%,#0e0e12_84%,#0a0d16_94%,#0c0e13_100%)] font-['Open_Sans',sans-serif] text-white">
      <button type="button" aria-label="Start" className="flex w-12 shrink-0 items-center justify-center bg-[#050505]">
        <Icon className="h-4 w-4">
          <path d="M0 2.3 7 1.3v6.2H0zM8 1.2l8-1.2v7.5H8zM0 8.5h7v6.2l-7-1zM8 8.5h8V16l-8-1.2z" fill="#fff" stroke="none" />
        </Icon>
      </button>
      <div className="flex w-[344px] shrink-0 items-center bg-[#f2f2f2] pl-[9px] pr-[12px] text-[#2b2b2b]">
        <svg viewBox="0 0 22 22" className="h-[22px] w-[22px] shrink-0" aria-hidden="true">
          <circle cx="11" cy="11" r="9" fill="none" stroke="#111" strokeWidth="2.5" />
        </svg>
        <input
          aria-label="Rechercher"
          placeholder="Taper ici pour rechercher"
          className="ml-[9px] min-w-0 flex-1 bg-transparent text-[14px] outline-none placeholder:text-[#2b2b2b]"
        />
        <button type="button" aria-label="Micro">
          <Icon>
            <path d="M6 2.5c0-2 4-2 4 0V9c0 2-4 2-4 0zM3.5 8v2.5c0 1.5 1 2 2.5 2h4c1.5 0 2.5-.5 2.5-2V8M8 12.5V16M6 15.5h4" />
          </Icon>
        </button>
      </div>
      <button type="button" aria-label="Task view" className="flex w-[49px] items-center justify-center">
        <Icon>
          <path d="M1.5 5.5h9v6h-9zM1.5 1v2.5h9V1M1.5 16v-2.5h9V16M14.5 1v15" />
          <path d="M13.5 5h2v3h-2z" fill="currentColor" stroke="none" />
        </Icon>
      </button>
      <nav className="ml-px flex">
        {taskbarApps.map((app) => (
          <button key={app.name} type="button" aria-label={app.name} className="relative flex w-[49px] items-center justify-center">
            <svg viewBox="0 0 24 24" className="h-[23px] w-[23px]" aria-hidden="true">{app.art}</svg>
            {app.running && <span className="absolute inset-x-[4px] bottom-0 h-[2px] bg-[#76b9ed]" />}
          </button>
        ))}
        <button type="button" aria-label="Blender" className="relative flex w-[49px] items-center justify-center">
          <BlenderLogo main="#ea7600" iris="#1f5a9e" className="h-[19px] w-[23px]" />
          <span className="absolute inset-x-[4px] bottom-0 h-[2px] bg-[#76b9ed]" />
        </button>
      </nav>
      <div className="ml-auto mr-[4px] flex items-center border-r border-[#555] pr-5">
        <button type="button" aria-label="People" className="mr-5">
          <Icon>
            <circle cx="5" cy="8" r="2.5" />
            <path d="M1 15.5c0-6 8-6 8 0" />
            <circle cx="11" cy="3" r="2.5" />
            <path d="M8 7.5c2-3 7-2 7 3" />
          </Icon>
        </button>
        <button type="button" aria-label="Hidden icons" className="mr-2">
          <Icon><path d="m2 10.5 6-6 6 6" strokeWidth="1.3" /></Icon>
        </button>
        <button type="button" aria-label="Battery" className="mr-[9px]">
          <Icon>
            <path d="M5 4.5h9.5v7H4.5V9M15.5 6.5v3" strokeWidth="1.2" />
            <path d="M8 6.5h5v3.5H8zM0 4h5v3L3.5 8h-2L0 7z" fill="currentColor" stroke="none" />
            <path d="M1.5 2v2M3.5 2v2M2.5 8v3.5h3" />
          </Icon>
        </button>
        <button type="button" aria-label="Network" className="mr-2">
          <Icon>
            <path d="M2 14C2 8 7 3 14 3M5 14.5C5 10 9 6 14 6M8 14.5C8.5 11.5 11 9 14 9" opacity=".8" />
            <circle cx="12.5" cy="13" r="1.5" fill="currentColor" stroke="none" />
          </Icon>
        </button>
        <button type="button" aria-label="Volume" className="mr-[10px]">
          <Icon>
            <path d="M.5 5.5h2l4-3.5v12l-4-3.5h-2zM8.5 5.5c1 1.5 1 3.5 0 5M11 3.5c2 2.5 2 6.5 0 9" />
            <path d="M13.5 2c2.5 3 2.5 9 0 12" opacity=".5" />
          </Icon>
        </button>
        <div className="mr-[18px] text-center text-[11px] leading-[18px]">
          <time className="block">23:13</time>
          <time className="block">15/06/2019</time>
        </div>
        <button type="button" aria-label="Notifications">
          <Icon><path d="M.5 1.5h15v11h-5L8 15l-2.5-2.5h-5z" strokeWidth="1.2" /></Icon>
        </button>
      </div>
    </footer>
  );
}

export default function App() {
  return (
    <div className="flex h-screen min-h-[720px] flex-col overflow-hidden bg-[#202020] font-['DejaVu_Sans_Condensed','DejaVu_Sans',sans-serif] text-[11px]">
      <TitleBar />
      <TopBar />
      <div className="flex min-h-0 flex-1 gap-[3px] px-px">
        <div className="flex min-w-0 flex-1 flex-col">
          <Viewport />
          <Timeline />
        </div>
        <aside className="flex w-[331px] shrink-0 flex-col">
          <Outliner />
          <Properties />
        </aside>
      </div>
      <StatusBar />
      <Taskbar />
    </div>
  );
}
